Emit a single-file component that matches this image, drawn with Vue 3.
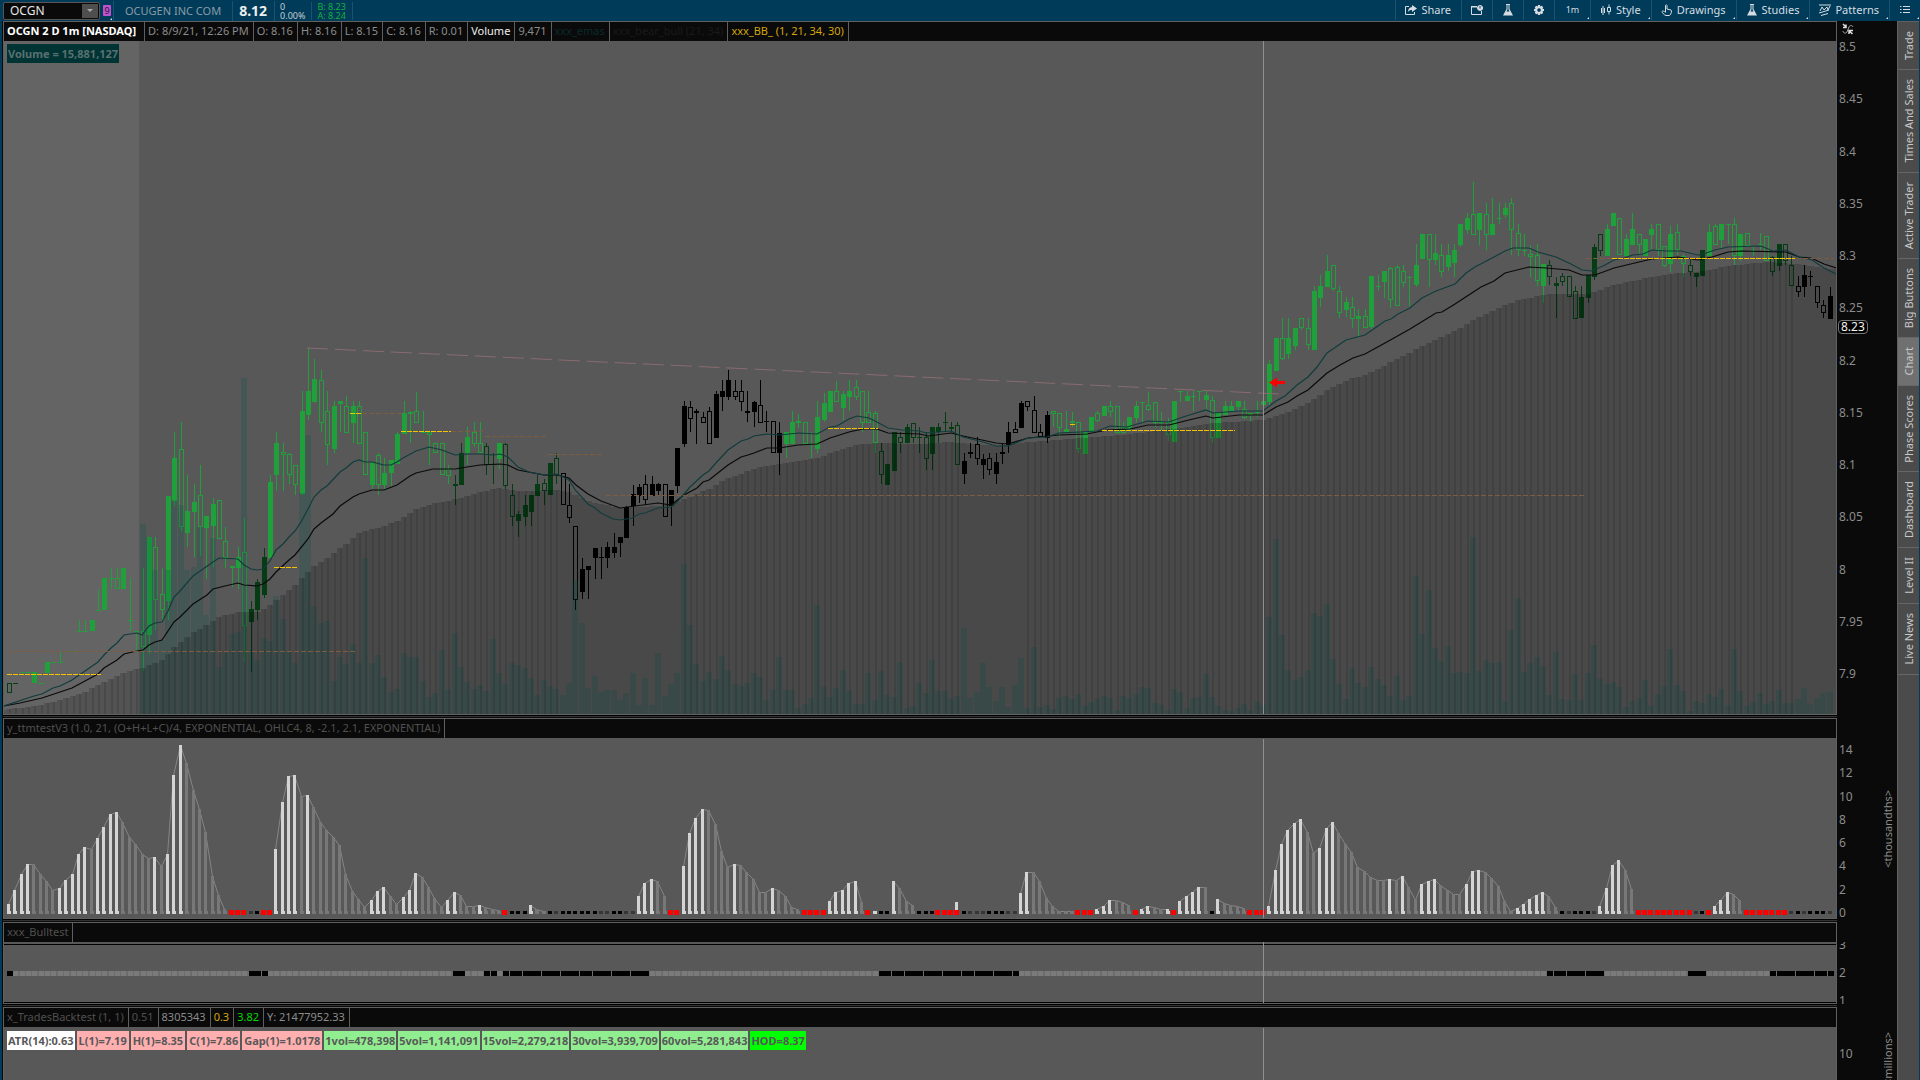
<template>
  <div class="app">
    <header class="toolbar">
      <div class="symbol-box">
        <input class="symbol-input" type="text" value="OCGN" aria-label="Symbol">
        <button class="symbol-drop" type="button" aria-label="Recent symbols"></button>
      </div>
      <button class="link-badge corner" type="button" aria-label="Link group"><span>9</span></button>
      <span class="company">OCUGEN INC COM</span>
      <span class="last">8.12</span>
      <div class="pair"><span>0</span><span>0.00%</span></div>
      <div class="pair bid-ask"><span>B: 8.23</span><span>A: 8.24</span></div>

      <nav class="tools">
        <button
          v-for="tool in tools"
          :key="tool.name"
          type="button"
          class="tool"
          :class="{ corner: tool.menu, 'icon-only': !tool.label }"
          :aria-label="tool.name"
        >
          <span v-if="tool.text" class="interval">{{ tool.text }}</span>
          <svg v-else class="tool-icon" viewBox="0 0 12 12" aria-hidden="true">
            <path v-for="(d, n) in tool.fill" :key="'f' + n" :d="d" fill="currentColor" fill-rule="evenodd" />
            <path v-for="(d, n) in tool.line" :key="'l' + n" :d="d" fill="none" stroke="currentColor" />
          </svg>
          <span v-if="tool.label">{{ tool.label }}</span>
        </button>
      </nav>
    </header>

    <div class="workspace">
      <main class="panes">
        <!-- Price -->
        <section class="pane pane-price">
          <div class="pane-main">
            <div class="pane-head">
              <span v-for="cell in priceHead" :key="cell.text" class="cell" :class="cell.tone">{{ cell.text }}</span>
            </div>
            <div class="plot">
              <svg class="canvas" viewBox="4 41 1832 673" preserveAspectRatio="none" role="img" aria-label="OCGN one minute candles">
                <rect x="4" y="41" width="135" height="673" class="premarket" />
                <g v-for="c in candles" :key="'c' + c.i" :class="c.tone" shape-rendering="crispEdges">
                  <path :d="c.wick" class="wick" />
                  <rect v-if="c.hollow" :x="c.x - 1.5" :y="c.top + 0.5" width="4" :height="c.height - 1" class="hollow" />
                  <rect v-else :x="c.x - 2" :y="c.top" width="5" :height="c.height" class="solid" />
                </g>
                <path :d="volumePath" class="volume" />
                <path :d="cloudPath" class="cloud" />
                <path :d="stripePath" class="stripes" />
                <polyline :points="slowEma" class="ema slow" />
                <polyline :points="fastEma" class="ema fast" />
                <line v-for="(l, n) in levels" :key="'lv' + n" :x1="l[1]" :x2="l[2]" :y1="l[3] + 0.5" :y2="l[3] + 0.5" :class="l[0]" />
                <line x1="307" y1="348" x2="1279" y2="394" class="trend" />
                <line x1="1263.5" x2="1263.5" y1="41" y2="714" class="cross" />
                <path d="M1269 382.500l8-5v3.500h8v3h-8v3.500z" fill="#f00" />
              </svg>
              <span class="volume-label">Volume = 15,881,127</span>
            </div>
          </div>
          <div class="axis">
            <svg class="axis-tool" viewBox="0 0 12 12" aria-hidden="true">
              <path d="M1 1l3 3M4 1.500v3H1M7 11V7.500h4M7.500 8l3 3" fill="none" stroke="#ddd" stroke-width="1.500" />
              <path d="M1 8c0 2 3 3 4 1L7 4c1-2 3-2 4 0" fill="none" stroke="#aaa" />
            </svg>
            <div class="scale price-scale">
              <span v-for="p in prices" :key="p">{{ p }}</span>
            </div>
            <span class="price-tag">8.23</span>
          </div>
        </section>

        <!-- Momentum histogram -->
        <section class="pane pane-ttm">
          <div class="pane-main">
            <div class="pane-head">
              <span class="cell dim">y_ttmtestV3 (1.0, 21, (O+H+L+C)/4, EXPONENTIAL, OHLC4, 8, -2.1, 2.1, EXPONENTIAL)</span>
            </div>
            <div class="plot">
              <svg class="canvas" viewBox="4 738 1832 180" preserveAspectRatio="none" role="img" aria-label="Momentum histogram">
                <path v-for="(d, n) in ttmOutline" :key="'o' + n" :d="d" class="outline" />
                <g shape-rendering="crispEdges">
                  <template v-for="b in ttm" :key="b.i">
                    <rect v-if="b.top" :x="b.x - 1" :y="b.top" width="3" :height="914 - b.top" :class="b.kind === 'r' ? 't-w' : 't-' + b.kind" />
                    <rect v-if="b.kind === 'r'" :x="b.x - 2" y="910" width="5" height="5" class="t-r" />
                    <rect v-else :x="b.x - 1" y="911" width="4" height="3" :class="'t-' + b.kind" />
                  </template>
                </g>
                <line x1="1263.5" x2="1263.5" y1="739" y2="918" class="cross" />
              </svg>
            </div>
          </div>
          <div class="axis">
            <div class="scale ttm-scale">
              <span v-for="n in [14, 12, 10, 8, 6, 4, 2, 0]" :key="n">{{ n }}</span>
            </div>
            <span class="unit">&lt;thousandths&gt;</span>
          </div>
        </section>

        <!-- Bull test strip -->
        <section class="pane pane-bull">
          <div class="pane-main">
            <div class="pane-head"><span class="cell dim">xxx_Bulltest</span></div>
            <div class="plot">
              <svg class="canvas" viewBox="4 942 1832 61" preserveAspectRatio="none" role="img" aria-label="Bull test">
                <path d="M4 944.500H1836M4 1002.500H1836" stroke="#000" />
                <g shape-rendering="crispEdges">
                  <rect x="7" y="971" width="1827" height="5" fill="#6c6c6c" />
                  <rect v-for="b in bull" :key="b.i" :x="b.x - 2" y="971" :width="b.on ? 6 : 5" height="5" :fill="b.on ? '#000' : '#7a7a7a'" />
                </g>
                <line x1="1263.5" x2="1263.5" y1="942" y2="1003" class="cross" />
              </svg>
            </div>
          </div>
          <div class="axis">
            <div class="scale bull-scale"><span>3</span><span>2</span><span>1</span></div>
          </div>
        </section>

        <!-- Trades -->
        <section class="pane pane-trades">
          <div class="pane-main">
            <div class="pane-head">
              <span v-for="cell in tradesHead" :key="cell.text" class="cell" :class="cell.tone">{{ cell.text }}</span>
            </div>
            <div class="plot">
              <svg class="canvas" viewBox="4 1027 1832 53" preserveAspectRatio="none" aria-hidden="true">
                <line x1="1263.5" x2="1263.5" y1="1028" y2="1080" class="cross" />
              </svg>
              <div class="stat-row">
                <span v-for="stat in stats" :key="stat.text" class="stat" :class="stat.tone">{{ stat.text }}</span>
              </div>
            </div>
          </div>
          <div class="axis">
            <div class="scale trades-scale"><span>10</span></div>
            <span class="unit unit-millions">&lt;millions&gt;</span>
          </div>
        </section>
      </main>

      <aside class="side-tabs">
        <button v-for="tab in tabs" :key="tab" type="button" class="side-tab" :class="{ active: tab === 'Chart' }">
          <span>{{ tab }}</span>
        </button>
      </aside>
    </div>
  </div>
</template>

<script setup>
const flask = {
  fill: ['M4 0h4v1H7.500v4l3.500 6.500H1L4.500 5V1H4zM5.500 1v4.500L4.500 7.500h3L6.500 5.500V1z'],
}

const tools = [
  {
    name: 'Share',
    label: 'Share',
    fill: ['M7 1l5 3.500L7 8V6C5 6 4 6.500 3 8c0-3 1.500-4.500 4-5z'],
    line: ['M4 2.500H.500v8h9V8'],
  },
  { name: 'News', fill: ['M9 1a3 3 0 1 0 .1 0zM8.500 2h1v2.500h-1z', 'M0 2h6v1.500H0z'], line: ['M6 2.500H.500v8h10V7'] },
  { name: 'Analyze', ...flask },
  {
    name: 'Settings',
    fill: ['M5 1h2l.300 1.500L8.800 1.800 10.200 3.200 9.500 4.700 11 5v2l-1.500.300.700 1.500-1.400 1.400-1.500-.700L7 11H5l-.300-1.500-1.500.700-1.400-1.400.700-1.500L1 7V5l1.500-.300L1.800 3.200 3.200 1.800l1.500.700zM6 4.200a1.800 1.800 0 1 0 .1 0z'],
  },
  { name: 'Interval', text: '1m', menu: true },
  { name: 'Style', label: 'Style', menu: true, fill: ['M1 4h4v5H1zM2.500 2h1v9h-1z'], line: ['M7.500 3.500h3v4h-3zM9 .500v3M9 7.500v3'] },
  {
    name: 'Drawings',
    label: 'Drawings',
    menu: true,
    line: ['M4.500 8V1.500q1-1.500 1.500 0V5l4 1c1 .500.500 4-1.500 5.500H5C3 11 1 8.500 1 7.500c.500-1 2-.500 3.500 1'],
  },
  { name: 'Studies', label: 'Studies', menu: true, ...flask },
  {
    name: 'Patterns',
    label: 'Patterns',
    menu: true,
    line: ['M0 1h12M1 7l2-4 2 3 3-3 1 3 2-4M0 9l10-3M2 11.500l7-2'],
  },
  { name: 'More', menu: true, line: ['M1 2.500h1.500M4 2.500h7M1 5.500h1.500M4 5.500h7M1 8.500h1.500M4 8.500h7'] },
]

const priceHead = [
  { text: 'OCGN 2 D 1m [NASDAQ]', tone: 'title' },
  { text: 'D: 8/9/21, 12:26 PM' },
  { text: 'O: 8.16' },
  { text: 'H: 8.16' },
  { text: 'L: 8.15' },
  { text: 'C: 8.16' },
  { text: 'R: 0.01' },
  { text: 'Volume', tone: 'white' },
  { text: '9,471' },
  { text: 'xxx_emas', tone: 'teal' },
  { text: 'xxx_bear_bull (21, 34)', tone: 'faint' },
  { text: 'xxx_BB_ (1, 21, 34, 30)', tone: 'gold' },
]

const tradesHead = [
  { text: 'x_TradesBacktest (1, 1)', tone: 'dim' },
  { text: '0.51', tone: 'dim' },
  { text: '8305343' },
  { text: '0.3', tone: 'gold' },
  { text: '3.82', tone: 'green' },
  { text: 'Y: 21477952.33' },
]

const stats = [
  { text: 'ATR(14):0.63', tone: 'plain' },
  { text: 'L(1)=7.19', tone: 'pink' },
  { text: 'H(1)=8.35', tone: 'pink' },
  { text: 'C(1)=7.86', tone: 'pink' },
  { text: 'Gap(1)=1.0178', tone: 'pink' },
  { text: '1vol=478,398', tone: 'mint' },
  { text: '5vol=1,141,091', tone: 'mint' },
  { text: '15vol=2,279,218', tone: 'mint' },
  { text: '30vol=3,939,709', tone: 'mint' },
  { text: '60vol=5,281,843', tone: 'mint' },
  { text: 'HOD=8.37', tone: 'lime' },
]

const prices = ['8.5', '8.45', '8.4', '8.35', '8.3', '8.25', '8.2', '8.15', '8.1', '8.05', '8', '7.95', '7.9']
const tabs = ['Trade', 'Times And Sales', 'Active Trader', 'Big Buttons', 'Chart', 'Phase Scores', 'Dashboard', 'Level II', 'Live News']

// One slot per minute bar
const STEP = 6.366
const slot = (i) => Math.floor(9.4 + i * STEP)

// kind high top bottom low; g/d/k = green, dark, black; capitals are hollow
const candleData = `
D 683 683 693 693,d 683 683 683 683,g 672 672 672 672,g 672 672 672 672,g 672 672 683 683,g 683 683 683 683,g 662 662 673 673,g 662 662 662 662,g 652 662 662 662,g 651 651 651 651,
g 651 651 651 651,g 620 631 631 631,g 620 631 631 631,g 620 620 631 631,g 589 610 610 610,g 578 578 610 610,g 568 578 578 589,G 568 578 589 589,g 568 568 589 589,g 578 620 620 631,
g 631 631 631 651,G 568 631 647 671,g 537 537 635 654,G 537 547 600 630,G 568 594 610 620,g 496 496 601 620,g 432 458 501 506,G 422 449 527 531,g 475 511 533 547,g 484 502 512 557,
G 465 495 527 556,g 516 516 528 579,g 498 504 526 567,G 500 500 539 539,G 527 541 558 568,G 566 566 568 587,g 547 557 568 589,G 518 552 626 662,d 601 609 622 672,d 579 582 610 620,
d 548 557 595 598,g 475 482 558 558,g 432 443 475 491,G 443 452 455 491,G 453 454 475 484,G 465 465 485 495,g 391 411 494 495,g 348 391 415 420,g 359 379 402 402,G 370 380 423 432,
G 391 411 445 465,g 401 406 449 453,g 401 401 404 432,G 396 406 433 433,g 401 406 423 443,G 401 406 444 444,G 432 432 475 475,g 462 462 485 489,G 453 455 485 495,g 458 473 485 489,
g 460 460 473 486,g 432 434 464 464,g 401 413 434 434,g 411 412 414 443,G 392 411 423 423,g 411 432 432 432,G 432 432 435 465,G 443 443 453 453,G 443 443 475 475,G 465 469 476 484,
d 475 484 486 505,d 443 453 485 485,g 427 437 453 465,G 422 432 444 447,G 422 443 453 453,D 443 446 465 475,d 453 464 464 484,g 443 443 459 469,D 443 444 486 489,D 484 495 517 526,
d 511 514 521 537,d 495 505 517 526,d 495 495 512 526,d 475 484 496 496,D 479 483 491 505,d 463 463 495 495,D 453 458 475 484,K 473 473 505 505,K 484 505 518 523,K 526 526 600 610,
k 558 569 592 599,k 566 566 570 599,k 548 548 558 579,k 547 557 557 579,k 542 547 558 568,k 533 547 553 558,k 537 537 543 557,k 506 507 538 538,k 485 494 506 526,k 484 487 496 503,
K 475 484 500 505,k 476 484 496 496,k 483 484 491 495,K 484 484 517 517,k 490 490 506 526,k 448 448 486 493,k 401 406 444 447,K 401 407 419 432,k 409 411 413 444,K 412 417 423 423,
K 407 411 444 444,k 391 394 438 438,k 380 391 397 411,k 370 380 397 400,K 380 391 397 400,K 380 391 402 411,k 391 411 413 422,k 401 402 412 427,K 380 405 423 423,k 411 421 421 432,
K 421 421 453 453,k 422 433 453 475,g 432 432 444 458,g 411 422 444 444,g 414 421 423 428,G 422 422 444 444,g 432 444 444 458,g 401 417 449 453,g 393 403 420 422,g 391 391 412 412,
G 381 391 402 402,g 391 394 408 420,g 380 391 397 411,G 380 387 397 400,G 391 391 423 432,G 391 412 423 423,G 411 413 443 453,D 443 451 475 484,d 464 464 485 485,d 432 432 471 471,
D 432 437 443 453,d 424 427 443 443,D 423 423 438 443,d 427 437 437 453,D 432 437 459 470,d 427 427 454 470,d 423 427 432 443,d 412 422 422 432,d 422 427 429 432,D 422 425 465 465,
k 453 461 474 484,k 443 452 454 458,K 437 444 459 465,k 454 459 465 479,K 453 458 470 475,k 453 462 474 484,k 444 452 454 464,k 422 432 445 453,K 422 429 433 433,k 401 403 428 428,
K 401 401 407 411,K 396 410 433 433,K 424 432 437 437,k 411 415 438 443,G 411 411 414 427,G 413 413 428 437,g 411 429 432 432,g 412 421 423 427,G 422 422 449 453,g 432 432 454 454,
g 417 417 432 432,G 411 413 421 422,g 406 406 416 416,G 401 406 412 417,G 406 406 433 433,G 422 427 433 433,g 417 417 430 430,g 401 406 418 422,g 402 402 402 422,G 392 405 410 411,
G 402 402 423 427,g 412 421 423 430,G 418 422 435 441,g 401 401 442 442,g 391 391 391 402,g 391 396 401 401,g 391 396 396 411,g 391 391 391 401,g 391 395 400 410,G 396 400 438 443,
g 412 412 438 438,g 401 406 415 415,g 401 406 411 411,g 401 401 407 411,G 401 409 418 419,g 413 413 415 422,g 401 412 412 417,g 401 401 405 405,g 360 364 402 405,g 338 338 371 371,
G 318 338 359 360,g 318 338 354 359,g 328 328 346 350,G 318 318 328 330,G 318 328 345 350,g 286 291 350 350,g 275 286 298 307,g 255 271 287 287,G 265 265 289 291,G 286 291 313 318,
g 297 302 310 317,G 297 307 319 328,g 309 316 319 338,G 309 316 328 328,g 276 276 327 329,g 275 286 286 291,g 271 271 282 298,G 267 268 300 308,G 265 267 306 306,G 265 271 283 287,
g 276 277 277 306,g 244 265 285 287,g 234 234 259 259,G 234 234 260 287,g 234 253 260 265,G 244 255 272 277,g 244 255 267 271,g 244 250 263 277,g 224 224 245 247,g 213 218 230 234,
G 182 214 235 235,g 213 213 230 245,G 203 214 235 250,g 198 224 235 235,g 203 218 218 224,g 203 208 215 218,G 198 203 230 255,G 224 233 250 256,g 234 250 250 256,G 245 254 257 277,
G 244 255 281 286,g 264 264 286 303,D 260 265 277 285,d 277 283 286 318,D 273 276 282 286,D 276 276 297 297,D 286 291 319 319,d 286 297 318 318,d 275 275 298 303,d 244 247 277 280,
D 234 234 251 256,g 224 229 256 256,g 213 213 226 226,G 218 218 255 255,g 234 239 256 256,g 213 229 245 245,G 234 234 245 255,g 239 239 256 256,g 224 229 235 250,G 224 224 250 256,
G 246 246 266 267,g 226 234 264 272,G 224 232 250 255,G 254 256 264 277,D 260 265 272 276,d 273 273 277 287,d 250 250 276 276,g 224 232 256 256,G 224 226 245 245,g 224 224 240 248,
g 224 224 224 244,G 218 224 256 265,g 234 234 256 261,G 233 233 246 246,g 246 250 250 256,g 233 244 244 250,G 236 236 261 261,D 256 257 272 276,d 244 244 266 271,D 244 244 261 265,
D 256 265 286 286,K 276 286 292 297,k 265 275 287 297,k 271 276 276 286,K 286 286 303 308,K 300 305 313 318,k 287 296 319 319`

const candles = candleData.trim().split(',').map((entry, i) => {
  const [kind, ...nums] = entry.trim().split(' ')
  const [high, top, bottom, low] = nums.map(Number)
  const x = slot(i)
  return {
    i,
    x,
    top,
    height: Math.max(bottom - top, 1),
    tone: 'c-' + kind.toLowerCase(),
    hollow: kind !== kind.toLowerCase() && bottom - top > 1,
    wick: `M${x + 0.5} ${high}V${top}M${x + 0.5} ${bottom}V${low}`,
  }
})

// Tops of the volume bars, first one at the open
const volumeStart = 21
const volumeTops = [
  524, 537, 570, 640, 570, 500, 505, 570, 567, 527, 615, 538, 667, 653, 634, 632, 378, 650, 660, 638,
  641, 596, 619, 652, 663, 493, 435, 606, 623, 621, 681, 657, 664, 644, 663, 558, 663, 655, 677, 692,
  689, 653, 657, 657, 681, 697, 693, 650, 689, 633, 667, 682, 689, 685, 691, 639, 673, 684, 663, 665,
  668, 678, 695, 680, 686, 689, 695, 683, 580, 623, 688, 676, 692, 690, 690, 700, 693, 673, 705, 678,
  705, 653, 696, 684, 673, 564, 625, 664, 681, 672, 679, 656, 670, 684, 686, 683, 673, 677, 700, 690,
  657, 690, 690, 708, 704, 698, 605, 687, 697, 688, 670, 691, 704, 704, 673, 700, 671, 695, 697, 662,
  708, 706, 683, 693, 660, 691, 691, 699, 696, 628, 698, 692, 663, 687, 701, 687, 707, 685, 658, 708,
  647, 707, 705, 709, 698, 696, 699, 694, 706, 702, 699, 696, 698, 710, 696, 698, 694, 687, 688, 703,
  705, 710, 689, 692, 708, 698, 697, 674, 697, 706, 710, 711, 708, 704, 710, 701, 705, 617, 539, 635,
  670, 680, 677, 670, 613, 616, 604, 659, 684, 699, 668, 683, 687, 667, 679, 685, 696, 676, 700, 696,
  576, 634, 590, 648, 661, 646, 673, 672, 673, 537, 671, 660, 663, 662, 701, 630, 598, 672, 663, 657,
  666, 695, 652, 699, 700, 674, 700, 673, 645, 679, 684, 682, 687, 707, 701, 698, 680, 706, 694, 686,
  649, 685, 691, 711, 701, 703, 694, 697, 689, 705, 649, 691, 706, 702, 693, 704, 701, 690, 703, 703,
  699, 688, 704, 698, 693, 692,
]
const volumePath = volumeTops.map((top, n) => `M${slot(n + volumeStart) - 3} 714V${top}h6V714z`).join('')

// Upper edge of the band fill, interpolated to one step per bar
const cloudEdge = [
  [4, 710], [40, 705], [60, 700], [85, 692], [104, 682], [124, 672], [142, 668], [162, 660], [174, 647], [193, 633],
  [219, 617], [238, 612], [260, 612], [270, 605], [295, 585], [314, 566], [333, 554], [359, 533], [384, 526], [397, 521],
  [416, 509], [435, 503], [461, 498], [480, 492], [500, 488], [520, 491], [557, 490], [569, 492], [588, 501], [620, 508],
  [671, 505], [684, 499], [709, 489], [728, 478], [760, 467], [779, 464], [817, 458], [837, 451], [857, 445], [873, 443],
  [920, 444], [951, 442], [996, 446], [1028, 442], [1066, 439], [1110, 436], [1148, 432], [1193, 426], [1213, 423], [1263, 420],
  [1288, 412], [1308, 403], [1327, 390], [1353, 378], [1365, 375], [1385, 365], [1416, 349], [1455, 331], [1473, 320], [1494, 310],
  [1518, 300], [1550, 294], [1588, 294], [1614, 285], [1646, 278], [1678, 273], [1704, 271], [1728, 266], [1766, 262], [1799, 264],
  [1836, 270],
]
const cloudTop = (x) => {
  const n = Math.max(1, cloudEdge.findIndex((p) => p[0] >= x))
  const [x0, y0] = cloudEdge[n - 1]
  const [x1, y1] = cloudEdge[n]
  return Math.round(y0 + ((y1 - y0) * (x - x0)) / (x1 - x0))
}
const bars = candles.map((c) => c.i)
const cloudPath = 'M4 714V710' + bars.map((i) => `H${slot(i) - 3}V${cloudTop(slot(i))}`).join('') + 'H1836V714z'
const bearish = (i) => (i > 86 && i < 106) || (i > 149 && i < 160) || i > 280
const stripePath = bars.filter((i) => !bearish(i)).map((i) => `M${slot(i)} 714V${cloudTop(slot(i))}h2V714z`).join('')

const fastEma = `4,706 34,696 42,694 53,688 60,686 72,680 85,671 98,662 104,655 111,648 117,643 124,635 137,633 142,635 149,626 155,623
162,622 168,611 174,597 180,591 193,576 213,562 219,558 238,559 244,565 251,569 257,570 263,569 270,561 276,550 283,544 289,537
295,531 301,522 308,509 314,497 321,490 327,486 340,472 346,468 353,462 359,460 365,462 372,462 384,465 391,465 397,462 403,458
416,451 429,447 442,450 455,455 467,454 480,454 493,455 500,454 508,457 518,467 529,472 544,475 557,474 569,480 576,491 588,504
595,508 601,513 613,519 620,520 632,518 639,514 645,513 658,508 671,507 678,501 690,487 703,475 709,471 715,464 728,450 741,441
748,439 754,436 767,434 779,435 799,433 817,434 830,427 837,426 849,419 857,416 869,418 875,421 888,428 902,430 920,431 926,433
951,431 963,437 983,442 996,446 1008,446 1028,438 1047,437 1059,433 1080,432 1097,431 1110,426 1127,427 1148,421 1169,422
1183,417 1206,410 1213,413 1239,411 1263,411 1276,401 1285,396 1297,385 1308,377 1317,367 1327,353 1346,340 1365,335 1385,321
1391,319 1398,314 1410,308 1422,298 1436,291 1455,284 1466,273 1475,267 1494,257 1505,251 1513,248 1529,248 1538,252 1556,257
1571,264 1582,270 1592,271 1605,265 1614,260 1624,258 1633,255 1643,254 1652,250 1666,251 1681,251 1698,255 1706,253 1715,250
1728,247 1761,246 1773,251 1786,250 1799,257 1812,260 1824,268 1836,274`

const slowEma = `4,706 20,703 42,698 72,688 85,681 98,674 104,668 117,660 124,654 137,651 143,650 149,645 155,642 162,640 174,622 180,617
193,604 207,595 213,589 225,586 238,583 244,585 257,586 263,584 270,579 276,572 289,560 295,555 308,539 314,529 321,523 333,514
340,506 353,497 359,494 372,490 384,490 397,485 410,476 416,473 433,469 455,469 467,467 480,465 500,464 508,465 518,470 544,475
557,475 569,478 576,485 588,494 601,501 620,508 658,503 671,505 684,495 697,488 703,482 709,480 728,465 741,457 748,455 754,453
767,448 779,448 798,445 817,444 830,438 849,432 863,429 877,429 888,433 920,434 928,436 951,433 963,436 982,440 996,443 1008,444
1028,438 1059,435 1087,434 1107,430 1130,429 1148,425 1169,425 1193,419 1206,416 1213,418 1239,415 1263,415 1276,407 1288,402
1297,396 1308,390 1327,373 1340,365 1353,358 1365,354 1385,343 1410,329 1436,313 1442,312 1455,304 1481,287 1494,281 1505,273
1529,267 1546,268 1569,270 1582,275 1595,275 1614,268 1639,262 1652,259 1678,257 1698,260 1712,257 1728,252 1741,251 1786,252
1799,257 1811,258 1824,264 1836,268`

const levels = [
  ['old-level', 7, 356, 651],
  ['old-level', 362, 403, 413],
  ['old-level', 451, 483, 431],
  ['old-level', 485, 547, 436],
  ['old-level', 548, 604, 454],
  ['old-level', 606, 1585, 495],
  ['old-level', 1586, 1834, 258],
  ['level', 7, 101, 674],
  ['level', 274, 298, 567],
  ['level', 350, 362, 413],
  ['level', 401, 451, 431],
  ['level', 828, 878, 428],
  ['level', 1070, 1076, 424],
  ['level', 1102, 1235, 430],
  ['level', 1612, 1795, 258],
]

// w rising, g falling, r squeeze, b/d flat; the number is the bar's top
const ttmData = `
w904 w890 w874 w864 g864 g874 g881 g890 w888 w880 w874 w854 w847 g849 w838 w827 w814 w812 g822 g837
g844 g854 g858 w857 g866 w854 w775 w745 g763 g790 g809 g832 g876 g895 g909 r r r d b
r r w849 w802 w776 w775 g796 w795 g807 g822 g830 g837 g845 g874 g891 g899 g907 w900 w891 w887
g896 g904 w897 w890 w873 g877 g887 g898 g907 w900 w892 g895 g906 g906 w905 g907 g909 g910 r b
b b w905 g909 g911 b d b b b b b b d d b b d d w896
w883 w879 g881 g896 r r w866 w833 w818 w809 g810 g824 g851 g867 w864 g865 g872 g879 g892 g892
w888 g890 g896 g907 g909 r r r r w901 w892 w890 w883 w881 g902 r w b b w881
g888 g901 g905 b b b r r r r902 b d d d b b b d d w893
w872 g872 g881 g898 g906 g911 g911 g911 r r r w909 w906 w900 g900 g902 g905 r w909 w906
g907 g909 w909 r w901 w896 w892 w887 g887 b w899 g903 g905 g906 g908 r r r w906 w870
w844 w830 w823 w819 g832 g853 w848 w828 w822 g833 g844 g852 g867 g871 g877 g880 g880 w879 g880 w876
g887 g900 w884 w881 w879 g885 g890 g894 g894 w884 w871 w870 g872 g878 g886 g901 g911 w908 w904 w899
w895 w892 g896 g907 b d b b b d w906 w888 w865 w860 g870 g889 r r r r
r r r r r d b r w906 w900 w892 g894 g900 r r r r r r r
d b d b b b d`
const ttm = ttmData.trim().split(/\s+/).map((t, i) => ({ i, x: slot(i) - 1, kind: t[0], top: Number(t.slice(1)) || 0 }))

const ttmOutline = []
let run = ''
for (const b of ttm) {
  if (b.top && b.kind !== 'r') {
    run += `${run ? 'L' : 'M'}${b.x + 0.5} ${b.top + 0.5}`
  } else if (run) {
    ttmOutline.push(run)
    run = ''
  }
}

const bullOff = [[0, 0], [38, 40], [70, 71], [75, 76], [78, 100], [137, 158], [242, 250], [264, 266], [277, 286]]
const bull = bars.map((i) => ({ i, x: slot(i), on: bullOff.some(([a, b]) => i >= a && i <= b) }))
</script>

<style>
html,
body { margin: 0; background: #0a0a0a; }
</style>

<style scoped>
*,
*::before,
*::after { box-sizing: border-box; }

.app {
  display: flex;
  flex-direction: column;
  height: 100vh;
  overflow: hidden;
  background: #003b59;
  font-family: "Noto Sans", "Open Sans", sans-serif;
  font-size: 11px;
  line-height: 14px;
  color: #8c8c8c;
}

button { font: inherit; color: inherit; border: 0; margin: 0; padding: 0; background: none; }

/* Toolbar */
.toolbar { display: flex; align-items: center; flex: none; height: 21px; padding-left: 3px; color: #d5dde2; }

.symbol-box {
  display: flex;
  width: 97px;
  height: 18px;
  padding: 1px;
  border: 1px solid #555;
  border-radius: 2px;
  background: #0a0a0a;
}
.symbol-input {
  flex: 1;
  min-width: 0;
  padding: 0 5px;
  border: 0;
  background: none;
  font: inherit;
  font-size: 12px;
  color: #e6e6e6;
}
.symbol-drop { display: grid; place-items: center; width: 16px; background: #4e4e4e; }
.symbol-drop::after { content: ""; border: 3px solid transparent; border-top-color: #aaa; border-bottom: 0; }

.link-badge { display: flex; align-items: center; width: 14px; height: 20px; padding-left: 3px; border-right: 1px solid #1b5271; }
.link-badge span { width: 8px; font-size: 9px; line-height: 11px; border-radius: 1px; background: #c44fd0; color: #222; text-align: center; }

.company { padding: 0 11px; line-height: 20px; color: #8a9ba6; border-right: 1px solid #1b5271; }
.last { padding: 0 7px 0 6px; line-height: 20px; font-size: 14px; font-weight: 700; color: #eee; border-right: 1px solid #1b5271; }
.pair { display: flex; flex-direction: column; padding: 0 6px 0 5px; font-size: 9px; line-height: 9px; border-right: 1px solid #1b5271; color: #c5ced4; }
.bid-ask { color: #17b03c; }

.tools { display: flex; align-self: stretch; margin-left: auto; }
.tool {
  display: flex;
  align-items: center;
  gap: 4px;
  height: 20px;
  padding: 0 10px 0 9px;
  border-left: 1px solid #1b5271;
}
.icon-only { width: 31px; justify-content: center; padding: 0; }
.tool-icon { width: 12px; height: 12px; }
.interval { font-size: 9px; }
.icon-only:has(.interval) { width: 36px; }
.corner { position: relative; }
.corner::after {
  content: "";
  position: absolute;
  right: 1px;
  bottom: 1px;
  border: 1px solid #dfe6ea;
  border-top-color: transparent;
  border-left-color: transparent;
}

/* Layout */
.workspace { display: flex; flex: 1; min-height: 0; padding: 0 1px 0 2px; }
.panes { display: flex; flex-direction: column; flex: 1; min-width: 0; padding-left: 1px; background: #0a0a0a; }
.pane { display: flex; min-height: 0; overflow: hidden; }
.pane-price { flex: 697 1 0; }
.pane-ttm { flex: 204 1 0; }
.pane-bull { flex: 85 1 0; }
.pane-trades { flex: 73 1 0; }

.pane-main {
  display: flex;
  flex-direction: column;
  flex: 1;
  min-width: 0;
  margin-bottom: 3px;
  border: 1px solid #606060;
  box-shadow: 0 1px 0 #000, 0 2px 0 #333;
}
.pane-trades .pane-main { margin-bottom: 0; border-bottom: 0; }

.pane-head { display: flex; flex: none; height: 19px; background: #0a0a0a; }
.cell { padding: 0 4px 0 3px; line-height: 18px; white-space: nowrap; border-right: 1px solid #5f5f5f; }
.title { padding-right: 8px; color: #fff; font-weight: 700; }
.white { color: #eee; }
.dim { color: #505050; }
.teal { color: #0a2b2b; }
.faint { color: #1a1a1a; }
.gold { color: #d3a60c; }
.green { color: #00d800; }

.plot { position: relative; flex: 1; min-height: 0; background: #585858; }
.canvas { display: block; width: 100%; height: 100%; }

/* Axis */
.axis { position: relative; display: flex; width: 60px; flex: none; padding-left: 2px; font-size: 12px; }
.axis-tool { position: absolute; top: 2px; left: 5px; width: 12px; height: 12px; }
.scale { display: flex; flex-direction: column; justify-content: space-between; }
.price-scale { padding: 19px 0 37px; }
.ttm-scale { padding: 25px 0 2px; }
.bull-scale { margin: 20px 0 3px; line-height: 6px; overflow: hidden; }
.trades-scale { padding-top: 40px; }
.price-tag {
  position: absolute;
  top: 299px;
  left: 1px;
  padding: 0 2px;
  line-height: 12px;
  border: 1px solid #777;
  border-radius: 4px;
  background: #000;
  color: #f2f2f2;
}
.unit { margin: auto 2px auto auto; padding-bottom: 18px; writing-mode: vertical-rl; transform: rotate(180deg); font-size: 11px; }
.unit-millions { align-self: flex-start; margin: 25px 2px 0 auto; padding: 0; }

/* Overlays */
.volume-label { position: absolute; top: 3px; left: 3px; padding: 0 1px; line-height: 19px; font-weight: 700; background: #003333; color: #587070; }
.stat-row { position: absolute; top: 4px; left: 3px; display: flex; gap: 2px; }
.stat { padding: 0 1px; line-height: 19px; font-weight: 700; color: #585858; white-space: nowrap; }
.pink { padding: 0 2px; background: #ffafaf; }
.plain { background: #fff; }
.mint { background: #90ee90; }
.lime { background: #00ff00; }

/* Chart marks */
.premarket { fill: #646464; }
.c-g { --ink: #1fa03a; }
.c-d { --ink: #063c14; }
.c-k { --ink: #000; }
.wick { stroke: var(--ink); }
.solid { fill: var(--ink); }
.hollow { fill: none; stroke: var(--ink); }
.volume { fill: #00544c; fill-opacity: 0.21; shape-rendering: crispEdges; }
.cloud { fill: #000; fill-opacity: 0.16; shape-rendering: crispEdges; }
.stripes { fill: #000; fill-opacity: 0.11; shape-rendering: crispEdges; }
.ema { fill: none; stroke-width: 1.2; }
.slow { stroke: #0a0a0a; }
.fast { stroke: #113c3c; }
.level { stroke: #f5c400; stroke-dasharray: 5 1; }
.old-level { stroke: #7c5d42; stroke-dasharray: 5 2; }
.trend { stroke: #896b70; stroke-dasharray: 21 7; }
.cross { stroke: #909090; }
.outline { fill: none; stroke: #858585; }
.t-w { fill: #d4d4d4; }
.t-g { fill: #787878; }
.t-r { fill: #f00; }
.t-b { fill: #000; }
.t-d { fill: #363636; }

/* Side tabs */
.side-tabs { display: flex; flex-direction: column; width: 22px; flex: none; background: #4b4b4b; border-left: 1px solid #606060; border-top: 1px solid #606060; }
.side-tab { display: flex; justify-content: center; padding: 9px 0; border-bottom: 1px solid #666; color: #c8c8c8; }
.side-tab span { writing-mode: vertical-rl; transform: rotate(180deg); line-height: 16px; }
.active { background: #707070; }
</style>
